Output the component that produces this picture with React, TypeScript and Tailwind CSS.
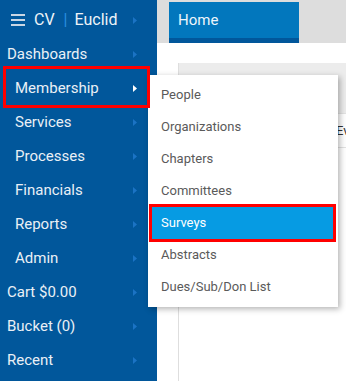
const navItems = [
  { label: "Dashboards", sub: false },
  { label: "Membership", sub: true, active: true },
  { label: "Services", sub: true },
  { label: "Processes", sub: true },
  { label: "Financials", sub: true },
  { label: "Reports", sub: true },
  { label: "Admin", sub: true },
  { label: "Cart $0.00", sub: false },
  { label: "Bucket (0)", sub: false },
  { label: "Recent", sub: false },
];

const menuItems = [
  "People",
  "Organizations",
  "Chapters",
  "Committees",
  "Surveys",
  "Abstracts",
  "Dues/Sub/Don List",
];

function Caret({ bright }: { bright?: boolean }) {
  return (
    <svg width="4" height="7" viewBox="0 0 4 7" className="shrink-0">
      <path d="M0 0 L4 3.5 L0 7 Z" fill={bright ? "#ffffff" : "#1b73c4"} />
    </svg>
  );
}

export default function App() {
  return (
    <div className="relative flex h-[381px] w-[346px] overflow-hidden bg-white font-['Roboto',sans-serif]">
      <aside className="flex w-[157px] shrink-0 flex-col bg-[#01579b] pt-[3px]">
        <div className="flex h-[34px] items-center pl-[11px] pr-[20px]">
          <div className="flex w-[14px] flex-col gap-[3px]">
            <span className="h-[2px] bg-[#c9d6e4]" />
            <span className="h-[2px] bg-[#c9d6e4]" />
            <span className="h-[2px] bg-[#c9d6e4]" />
          </div>
          <span className="ml-[9px] text-[16px] text-[#eef3f8]">CV</span>
          <span className="ml-[9px] text-[16px] text-[#2a8ee0]">|</span>
          <span className="ml-[7px] flex-1 text-[16px] text-[#eef3f8]">Euclid</span>
          <Caret />
        </div>
        {navItems.map((item) => (
          <div
            key={item.label}
            className={`flex h-[34px] items-center pr-[20px] ${item.sub ? "pl-[15px]" : "pl-[7px]"}`}
          >
            <span className="flex-1 text-[15px] text-[#eaf0f6]">{item.label}</span>
            <Caret bright={item.active} />
          </div>
        ))}
      </aside>

      <main className="flex flex-1 flex-col">
        <div className="flex h-[43px] bg-[#dddddd] pl-[12px] pt-[2px]">
          <div className="flex w-[130px] flex-col">
            <div className="flex flex-1 items-center bg-[#0277bd] pl-[9px] text-[15px] text-[#eef5fb]">
              Home
            </div>
            <div className="h-[5px] bg-[#01579b]" />
          </div>
        </div>
        <div className="ml-[21px] mt-[20px] flex flex-1 flex-col border-l border-[#dedede]">
          <div className="h-[50px] bg-[#ececec]" />
          <div className="flex h-[35px] items-center overflow-hidden border-y border-[#e2e2e2] pl-[157px] text-[13px] text-[#333]">
            Ev
          </div>
        </div>
      </main>

      <div className="absolute left-[148px] top-[75px] w-[190px] bg-white py-[4px] shadow-[2px_2px_6px_rgba(0,0,0,0.3)]">
        {menuItems.map((m) => (
          <div
            key={m}
            className={`mx-[4px] flex h-[32px] items-center pl-[9px] text-[13px] ${
              m === "Surveys" ? "bg-[#069be3] text-white" : "text-[#5a5a5a]"
            }`}
          >
            {m}
          </div>
        ))}
      </div>

      <div className="pointer-events-none absolute left-[3px] top-[66px] h-[42px] w-[147px] border-[3px] border-[#ff0000]" />
      <div className="pointer-events-none absolute left-[149px] top-[204px] h-[38px] w-[187px] border-[3px] border-[#ff0000]" />
    </div>
  );
}
